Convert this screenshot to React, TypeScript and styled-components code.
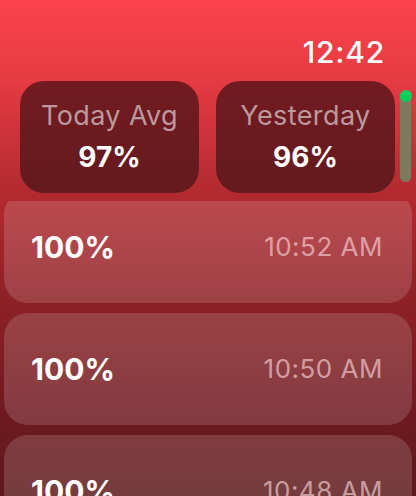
import styled, { createGlobalStyle } from 'styled-components';

const GlobalStyle = createGlobalStyle`
  html, body {
    margin: 0;
    padding: 0;
    background: #5e1a1c;
  }
  * {
    box-sizing: border-box;
  }
`;

export default function App() {
  /** 측정 기록 */
  const readings = [
    { value: '100%', time: '10:52 AM' },
    { value: '100%', time: '10:50 AM' },
    { value: '100%', time: '10:48 AM' },
  ];

  return (
    <>
      <GlobalStyle />
      <Screen>
        <StatusBar>
          <Clock>12:42</Clock>
        </StatusBar>

        <Summary>
          <StatCard>
            <StatLabel>Today Avg</StatLabel>
            <StatValue>97%</StatValue>
          </StatCard>
          <StatCard>
            <StatLabel>Yesterday</StatLabel>
            <StatValue>96%</StatValue>
          </StatCard>
          <ScrollTrack>
            <ScrollDot />
          </ScrollTrack>
        </Summary>

        <ListViewport>
          <List>
            {readings.map((item, index) => (
              <Row key={index}>
                <RowValue>{item.value}</RowValue>
                <RowTime>{item.time}</RowTime>
              </Row>
            ))}
          </List>
        </ListViewport>
      </Screen>
    </>
  );
}

const Screen = styled.main`
  position: relative;
  display: flex;
  flex-direction: column;
  width: 416px;
  height: 496px;
  overflow: hidden;
  font-family: Inter, 'Noto Sans', sans-serif;
  background: linear-gradient(
    180deg,
    #fc434b 0%,
    #e63b42 16%,
    #b82c32 36%,
    #8e2126 60%,
    #6e1a1f 84%,
    #5e1a1c 100%
  );
`;

const StatusBar = styled.header`
  display: flex;
  justify-content: flex-end;
  align-items: flex-end;
  height: 67px;
  padding-right: 31px;
`;

const Clock = styled.span`
  color: #ffffff;
  font-size: 30px;
  font-weight: 500;
  letter-spacing: 0.8px;
  line-height: 1;
`;

const Summary = styled.section`
  position: relative;
  display: flex;
  gap: 17px;
  margin-top: 14px;
  padding-left: 20px;
`;

const StatCard = styled.div`
  display: flex;
  flex-direction: column;
  align-items: center;
  width: 179px;
  height: 112px;
  padding-top: 19px;
  border-radius: 24px;
  background: linear-gradient(180deg, #721b21 0%, #641a1e 100%);
`;

const StatLabel = styled.span`
  color: #bc999f;
  font-size: 27px;
  font-weight: 400;
  letter-spacing: 0.4px;
  line-height: 32px;
`;

const StatValue = styled.span`
  margin-top: 9px;
  color: #ffffff;
  font-size: 28px;
  font-weight: 700;
  line-height: 32px;
`;

const ScrollTrack = styled.div`
  position: absolute;
  top: 10px;
  left: 400px;
  width: 11px;
  height: 91px;
  border-radius: 6px;
  background: #7d7a5e;
`;

const ScrollDot = styled.div`
  position: absolute;
  top: -1px;
  left: -0.5px;
  width: 12px;
  height: 12px;
  border-radius: 50%;
  background: #06d05c;
`;

const ListViewport = styled.section`
  margin-top: 8px;
  height: 295px;
  overflow: hidden;
`;

const List = styled.div`
  display: flex;
  flex-direction: column;
  gap: 10px;
  margin-top: -10px;
  padding: 0 4px;
`;

const Row = styled.div`
  display: flex;
  align-items: center;
  justify-content: space-between;
  height: 112px;
  padding: 0 29px 0 27px;
  border-radius: 24px;
  background: rgba(255, 255, 255, 0.15);
  flex-shrink: 0;
`;

const RowValue = styled.span`
  color: #ffffff;
  font-size: 30px;
  font-weight: 700;
  line-height: 1;
`;

const RowTime = styled.span`
  color: rgba(255, 222, 226, 0.62);
  font-size: 26px;
  font-weight: 400;
  letter-spacing: 0.5px;
  line-height: 1;
`;
